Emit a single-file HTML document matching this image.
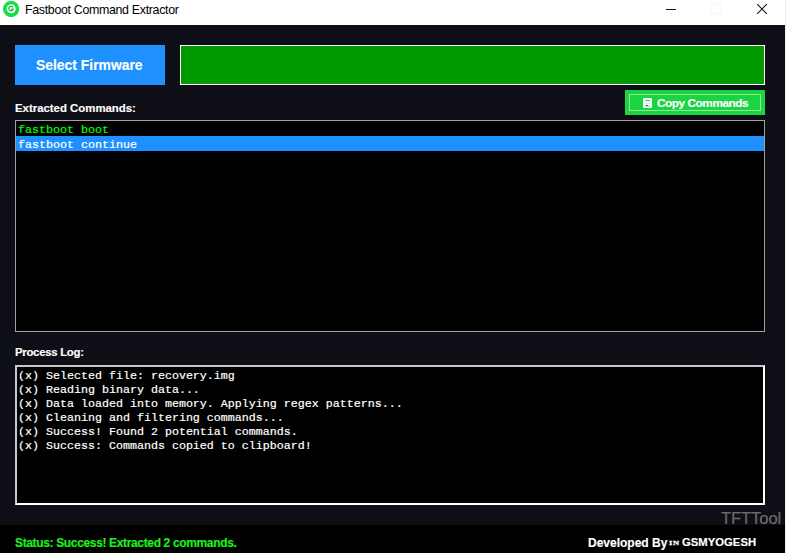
<!DOCTYPE html>
<html><head><meta charset="utf-8">
<style>
html,body{margin:0;padding:0;}
body{width:786px;height:553px;position:relative;overflow:hidden;background:#0e0e17;font-family:"Liberation Sans",sans-serif;}
.a{position:absolute;white-space:pre;line-height:1;}
#title{left:0;top:0;width:785px;height:25px;background:#fff;}
#rline{left:785px;top:0;width:1px;height:553px;background:#ececec;}
#status{left:0;top:524px;width:785px;height:28px;background:#000;border-top:1px solid #0e0f10;}
#selbtn{left:15px;top:45px;width:150px;height:40px;background:#1e90ff;}
#gbox{left:180px;top:45px;width:583px;height:38px;background:#009900;border:1px solid #fff;}
#copybtn{left:625px;top:90px;width:140px;height:25px;background:#1bd443;}
#copyin{left:629px;top:94px;width:130px;height:15px;border:1px solid #90ee90;}
#list{left:15px;top:120px;width:748px;height:210px;background:#000;border:1px solid #a0a0a0;}
#sel{left:16px;top:136px;width:748px;height:15px;background:#1e90ff;}
#log{left:15px;top:365px;width:746px;height:136px;background:#000;border-style:solid;border-width:2px;border-color:#c8c8c8 #fff #fff #c8c8c8;}
.b{font-weight:bold;-webkit-text-stroke:0.15px currentColor;}
.mono{font-family:"Liberation Mono",monospace;font-size:11.667px;-webkit-text-stroke:0.2px currentColor;}
</style></head><body>
<div class="a" id="title"></div>
<div class="a" id="rline"></div>
<div class="a" id="status"></div>
<!-- icon -->
<svg class="a" style="left:3px;top:1px" width="16" height="16" viewBox="0 0 16 16">
<circle cx="8.1" cy="8" r="8.1" fill="#14e045"/>
<circle cx="8.2" cy="7.8" r="4.5" fill="#fff"/>
<path d="M9.9 6.3 A2.2 2.2 0 1 0 10.2 8.1 H8.1" fill="none" stroke="#12c23e" stroke-width="1.3"/>
</svg>
<div class="a" style="left:25px;top:3.6px;font-size:12.4px;letter-spacing:-0.32px;color:#000;">Fastboot Command Extractor</div>
<!-- window controls -->
<div class="a" style="left:666px;top:9px;width:10px;height:1px;background:#111;"></div>
<div class="a" style="left:711px;top:4px;width:8px;height:8px;border:1px solid #f6f6f6;"></div>
<svg class="a" style="left:757px;top:4px" width="10" height="10" viewBox="0 0 10 10"><path d="M0 0 L10 10 M10 0 L0 10" stroke="#111" stroke-width="1.05"/></svg>

<div class="a" id="selbtn"></div>
<div class="a" style="left:36px;top:59px;font-size:13.9px;-webkit-text-stroke:0.15px currentColor;font-weight:bold;color:#fff;">Select Firmware</div>
<div class="a" id="gbox"></div>

<div class="a" style="left:15px;top:103px;font-size:11.4px;-webkit-text-stroke:0.15px currentColor;font-weight:bold;color:#fff;">Extracted Commands:</div>
<div class="a" id="copybtn"></div>
<div class="a" id="copyin"></div>
<svg class="a" style="left:643px;top:98px" width="9" height="10" viewBox="0 0 9 10"><rect x="0" y="0" width="9" height="10" rx="1" fill="#fff"/><rect x="2.5" y="2" width="4.5" height="1" fill="#1bd443"/><rect x="2.5" y="4.6" width="4.5" height="1" fill="#1bd443" opacity="0.35"/><rect x="2.5" y="7" width="2.5" height="1.2" fill="#109030"/><rect x="5.5" y="7.6" width="1.5" height="1" fill="#1bd443"/></svg>
<div class="a" style="left:657px;top:98px;font-size:11.8px;letter-spacing:-0.45px;-webkit-text-stroke:0.15px currentColor;font-weight:bold;color:#fff;">Copy Commands</div>

<div class="a" id="list"></div>
<div class="a" id="sel"></div>
<div class="a mono" style="left:18px;top:124.7px;color:#00ff00;">fastboot boot</div>
<div class="a mono" style="left:18px;top:139.8px;color:#fff;">fastboot continue</div>

<div class="a" style="left:15px;top:347.3px;font-size:11.4px;letter-spacing:-0.29px;-webkit-text-stroke:0.15px currentColor;font-weight:bold;color:#fff;">Process Log:</div>
<div class="a" id="log"></div>
<div class="a mono" style="left:18px;top:369px;color:#fff;line-height:14px;">(x) Selected file: recovery.img
(x) Reading binary data...
(x) Data loaded into memory. Applying regex patterns...
(x) Cleaning and filtering commands...
(x) Success! Found 2 potential commands.
(x) Success: Commands copied to clipboard!</div>

<div class="a" style="left:721px;top:510.6px;font-size:16.6px;letter-spacing:-0.1px;color:#6c6c6c;-webkit-text-stroke:0.2px #6c6c6c;">TFTTool</div>
<div class="a" style="left:15px;top:536.6px;font-size:12px;letter-spacing:-0.35px;-webkit-text-stroke:0.15px currentColor;font-weight:bold;color:#1ef01e;">Status: Success! Extracted 2 commands.</div>
<div class="a" style="left:588px;top:536.8px;font-size:12px;-webkit-text-stroke:0.15px currentColor;font-weight:bold;color:#fff;">Developed By</div>
<div class="a" style="left:669px;top:540.3px;font-family:'Liberation Serif',serif;font-size:6.8px;font-weight:bold;color:#fff;letter-spacing:0.5px;-webkit-text-stroke:0.3px #fff;transform:scaleX(1.25);transform-origin:0 0;">IN</div>
<div class="a" style="left:682px;top:537.3px;font-size:11.3px;-webkit-text-stroke:0.15px currentColor;font-weight:bold;color:#fff;">GSMYOGESH</div>
</body></html>
